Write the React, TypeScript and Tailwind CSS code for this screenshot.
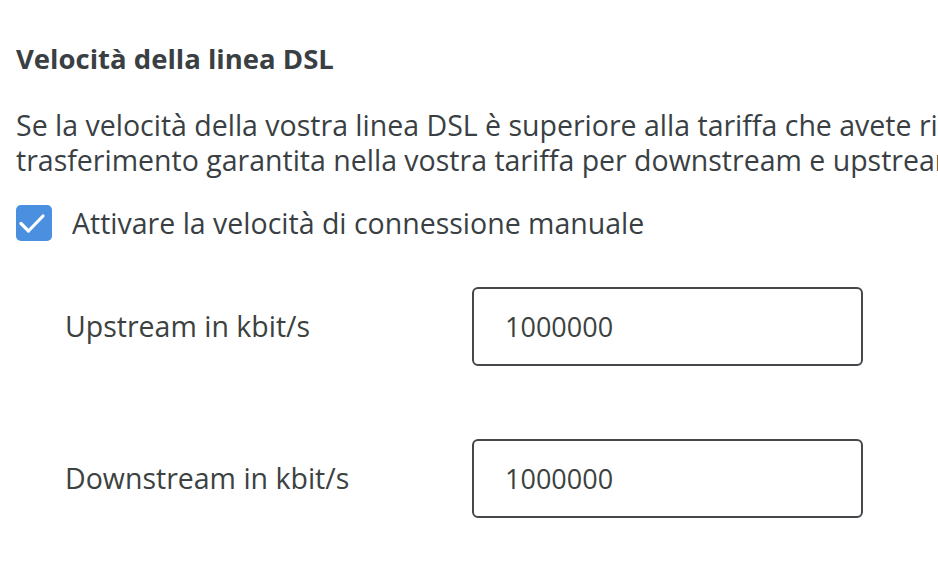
import { useState } from 'react'

function CheckBox({ checked, onToggle }: { checked: boolean; onToggle: () => void }) {
  return (
    <button
      onClick={onToggle}
      className={`flex h-[36px] w-[36px] shrink-0 items-center justify-center rounded-[5px] ${checked ? 'bg-[#4a8fe0]' : 'border-2 border-[#44484b] bg-white'}`}
    >
      {checked && (
        <svg width="36" height="36" viewBox="0 0 36 36" fill="none">
          <path d="M5 18.5l7.5 7.5L27 11" stroke="white" strokeWidth="3.2" strokeLinecap="round" strokeLinejoin="round" />
        </svg>
      )}
    </button>
  )
}

function SpeedRow({ label, value }: { label: string; value: string }) {
  return (
    <div className="flex h-[79px] items-center">
      <label className="w-[456px] shrink-0 pl-[49px] text-[28.5px] text-[#3c423f]">{label}</label>
      <input
        defaultValue={value}
        className="h-[79px] w-[391px] rounded-[6px] border-2 border-[#44484b] bg-white pl-[31px] text-[27px] text-[#3c423f] outline-none"
      />
    </div>
  )
}

export default function App() {
  const [manual, setManual] = useState(true)

  return (
    <div className="h-[580px] w-[938px] overflow-hidden bg-white pl-4 pt-[41px] font-['Open_Sans',sans-serif] text-[#3a3f44]">
      <h2 className="h-[36px] text-[27.5px] font-bold leading-[36px]">Velocità della linea DSL</h2>
      <p className="mt-[31px] whitespace-nowrap text-[28.5px] leading-[35px]">
        Se la velocità della vostra linea DSL è superiore alla tariffa che avete richiesto, potete inserire qui la velocità di
        <br />
        trasferimento garantita nella vostra tariffa per downstream e upstream.
      </p>
      <div className="mt-[27px] flex h-[36px] items-center gap-5">
        <CheckBox checked={manual} onToggle={() => setManual(!manual)} />
        <span className="text-[28.5px]">Attivare la velocità di connessione manuale</span>
      </div>
      <div className="mt-[46px] flex flex-col gap-[73px]">
        <SpeedRow label="Upstream in kbit/s" value="1000000" />
        <SpeedRow label="Downstream in kbit/s" value="1000000" />
      </div>
    </div>
  )
}
